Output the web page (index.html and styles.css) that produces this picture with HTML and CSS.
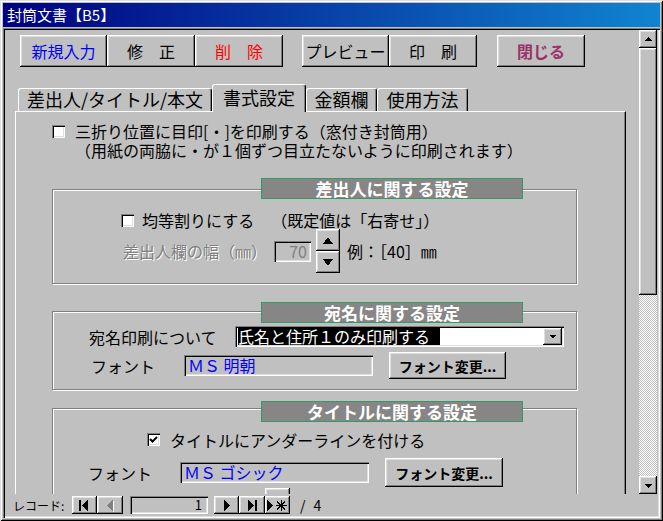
FILE: index.html
```html
<!DOCTYPE html>
<html lang="ja">
<head>
    <meta charset="UTF-8">
    <title>封筒文書【B5】</title>
    <link rel="stylesheet" href="styles.css">
</head>
<body>
<div class="window">
    <div class="titlebar">封筒文書【B5】</div>
    <div class="client">
        <div class="main">
            <div class="selector"></div>
            <div class="detail">
                <div class="toolbar">
                    <div class="btn-group">
                        <button class="cmd first blue">新規入力</button>
                        <button class="cmd">修　正</button>
                        <button class="cmd red">削　除</button>
                    </div>
                    <div class="btn-group gap19">
                        <button class="cmd first">プレビュー</button>
                        <button class="cmd">印　刷</button>
                    </div>
                    <button class="cmd close">閉じる</button>
                </div>

                <div class="tabs">
                    <div class="tab t1">差出人/タイトル/本文</div>
                    <div class="tab t2 active">書式設定</div>
                    <div class="tab t3">金額欄</div>
                    <div class="tab t4">使用方法</div>
                </div>

                <div class="page">
                    <div class="note">
                        <span class="check"></span>
                        <p class="note-text">三折り位置に目印[・]を印刷する（窓付き封筒用）<br>（用紙の両脇に・が１個ずつ目立たないように印刷されます）</p>
                    </div>

                    <!-- 差出人 -->
                    <div class="group g1">
                        <div class="legend">差出人に関する設定</div>
                        <div class="row r-check">
                            <span class="check"></span>
                            <span class="check-label">均等割りにする</span>
                            <span class="hint">（既定値は「右寄せ」）</span>
                        </div>
                        <div class="row r-width">
                            <span class="label disabled w151">差出人欄の幅（㎜）</span>
                            <span class="field num">70</span>
                            <div class="spinner">
                                <button class="spin">
                                    <svg width="24" height="22" shape-rendering="crispEdges"><polygon points="7,15 17,15 12,8" fill="#000"/></svg>
                                </button>
                                <button class="spin">
                                    <svg width="24" height="22" shape-rendering="crispEdges"><polygon points="7,8 17,8 12,15" fill="#000"/></svg>
                                </button>
                            </div>
                            <span class="example">例：［40］㎜</span>
                        </div>
                    </div>

                    <!-- 宛名 -->
                    <div class="group g2">
                        <div class="legend">宛名に関する設定</div>
                        <div class="row r-combo">
                            <span class="label w146 ml36">宛名印刷について</span>
                            <div class="combo">
                                <span class="combo-sel">氏名と住所１のみ印刷する</span>
                                <button class="drop">
                                    <svg width="19" height="17" shape-rendering="crispEdges"><polygon points="6,7 13,7 9.5,10.5" fill="#000"/></svg>
                                </button>
                            </div>
                        </div>
                        <div class="row r-font">
                            <span class="label w93 ml38">フォント</span>
                            <span class="field font-name">ＭＳ 明朝</span>
                            <button class="small-btn">フォント変更...</button>
                        </div>
                    </div>

                    <!-- タイトル -->
                    <div class="group g3">
                        <div class="legend">タイトルに関する設定</div>
                        <div class="row r-check3">
                            <span class="check checked">
                                <svg width="9" height="9"><polyline points="1,4 3.5,6.5 8,2" fill="none" stroke="#000" stroke-width="2"/></svg>
                            </span>
                            <span class="check-label">タイトルにアンダーラインを付ける</span>
                        </div>
                        <div class="row r-font3">
                            <span class="label w92 ml35">フォント</span>
                            <span class="field font-name">ＭＳ ゴシック</span>
                            <button class="small-btn wide">フォント変更...</button>
                        </div>
                        <div class="stub"></div>
                    </div>
                </div>
            </div>

            <div class="vscroll">
                <button class="sb-btn">
                    <svg width="16" height="16" shape-rendering="crispEdges"><polygon points="4,10 12,10 8,6" fill="#000"/></svg>
                </button>
                <div class="sb-thumb"></div>
                <div class="sb-track"></div>
                <button class="sb-btn">
                    <svg width="16" height="16" shape-rendering="crispEdges"><polygon points="4,7 12,7 8,11" fill="#000"/></svg>
                </button>
            </div>
        </div>

        <div class="navbar">
            <span class="nav-label">レコード:</span>
            <button class="nav-btn">
                <svg width="25" height="18" shape-rendering="crispEdges"><rect x="7" y="4" width="2" height="11" fill="#000"/><polygon points="16,4 16,15 10,9.5" fill="#000"/></svg>
            </button>
            <button class="nav-btn w26">
                <svg width="26" height="18" shape-rendering="crispEdges"><polygon points="17,5 17,16 11,10.5" fill="#fff"/><polygon points="16,4 16,15 10,9.5" fill="#808080"/></svg>
            </button>
            <span class="recno">1</span>
            <button class="nav-btn">
                <svg width="25" height="18" shape-rendering="crispEdges"><polygon points="10,4 10,15 16,9.5" fill="#000"/></svg>
            </button>
            <button class="nav-btn w26">
                <svg width="26" height="18" shape-rendering="crispEdges"><polygon points="9,4 9,15 15,9.5" fill="#000"/><rect x="16" y="4" width="2" height="11" fill="#000"/></svg>
            </button>
            <button class="nav-btn">
                <svg width="25" height="18" shape-rendering="crispEdges"><polygon points="2,4 2,15 8,9.5" fill="#000"/><g stroke="#000" stroke-width="1"><line x1="16" y1="4" x2="16" y2="15"/><line x1="10.5" y1="9.5" x2="21.5" y2="9.5"/><line x1="12" y1="5.5" x2="20" y2="13.5"/><line x1="20" y1="5.5" x2="12" y2="13.5"/></g></svg>
            </button>
            <span class="nav-count">/ 4</span>
        </div>
    </div>
</div>
</body>
</html>
```

FILE: styles.css
```css
* {
    box-sizing: border-box;
    margin: 0;
    padding: 0;
}
html,
body {
    width: 663px;
    height: 521px;
    overflow: hidden;
    background: #c0c0c0;
}
body {
    font-family: "Noto Sans CJK JP", "Noto Sans", sans-serif;
    font-size: 16px;
    color: #000;
}
button {
    font-family: inherit;
    color: inherit;
    border: none;
    background: #c0c0c0;
    display: flex;
    align-items: center;
    justify-content: center;
}
svg {
    display: block;
}

/* window frame */
.window {
    width: 663px;
    height: 521px;
    padding: 3px;
    display: flex;
    flex-direction: column;
    background: #c0c0c0;
    box-shadow: inset 1px 1px 0 #dfdfdf, inset -1px -1px 0 #000,
                inset 2px 2px 0 #fff, inset -2px -2px 0 #808080;
}
.titlebar {
    height: 24px;
    margin-bottom: 1px;
    padding-left: 4px;
    background: linear-gradient(to right, #000080, #1084d0);
    color: #fff;
    font-size: 15px;
    line-height: 24px;
}
.client {
    flex: 1;
    display: flex;
    flex-direction: column;
    padding: 2px;
    box-shadow: inset 1px 1px 0 #808080, inset 2px 2px 0 #000,
                inset -1px -1px 0 #fff, inset -2px -2px 0 #dfdfdf;
}
.main {
    display: flex;
    height: 464px;
}
.selector {
    width: 10px;
}
.detail {
    flex: 1;
    overflow: hidden;
}

/* raised look shared by buttons */
.cmd,
.small-btn,
.spin,
.drop,
.sb-btn,
.sb-thumb,
.nav-btn,
.stub {
    box-shadow: inset -1px -1px 0 #000, inset 1px 1px 0 #fff,
                inset -2px -2px 0 #808080, inset 2px 2px 0 #dfdfdf;
}
/* sunken look shared by fields */
.check,
.field,
.combo,
.recno {
    box-shadow: inset 1px 1px 0 #808080, inset 2px 2px 0 #000,
                inset -1px -1px 0 #fff, inset -2px -2px 0 #dfdfdf;
}

/* command buttons */
.toolbar {
    display: flex;
    margin-top: 5px;
    padding-left: 5px;
}
.btn-group {
    display: flex;
}
.gap19 {
    margin-left: 19px;
}
.cmd {
    width: 88px;
    height: 32px;
    font-size: 16px;
}
.cmd.first {
    width: 87px;
}
.cmd.blue {
    color: #0000ff;
}
.cmd.red {
    color: #ff0000;
}
.cmd.close {
    margin-left: 20px;
    color: #993366;
    font-weight: bold;
}

/* tabs */
.tabs {
    display: flex;
    align-items: flex-end;
    height: 27px;
    margin-top: 17px;
    padding-left: 3px;
    position: relative;
    z-index: 1;
}
.tab {
    height: 23px;
    border-top: 1px solid #fff;
    border-left: 1px solid #fff;
    border-right: 1px solid #000;
    border-radius: 3px 3px 0 0;
    box-shadow: inset -1px 0 0 #808080;
    font-size: 18px;
    line-height: 21px;
    text-align: center;
    background: #c0c0c0;
}
.tab.active {
    height: 28px;
    margin-bottom: -1px;
    line-height: 24px;
}
.t1 { width: 194px; }
.t2 { width: 94px; }
.t3 { width: 71px; }
.t4 { width: 91px; }

.page {
    width: 611px;
    height: 420px;
    padding: 10px 0 0 36px;
    border-top: 1px solid #fff;
    border-left: 1px solid #fff;
    border-right: 1px solid #000;
    box-shadow: inset -1px 0 0 #808080;
}

/* checkboxes */
.check {
    width: 13px;
    height: 13px;
    flex: none;
    background: #fff;
    display: flex;
    align-items: center;
    justify-content: center;
}
.note {
    display: flex;
    line-height: 19px;
}
.note .check {
    margin-top: 3px;
}
.note-text {
    margin-left: 10px;
}

/* group frames */
.group {
    position: relative;
    width: 525px;
    border: 1px solid #808080;
    box-shadow: inset 1px 1px 0 #fff, 1px 1px 0 #fff;
}
.legend {
    position: absolute;
    left: 208px;
    top: -12px;
    width: 262px;
    height: 21px;
    background: #868686;
    border: 1px solid #339966;
    color: #fff;
    font-size: 17px;
    font-weight: bold;
    line-height: 19px;
    text-align: center;
}
.g1 {
    height: 95px;
    margin-top: 29px;
    padding-top: 21px;
}
.g2 {
    height: 79px;
    margin-top: 27px;
    padding-top: 14px;
}
.g2 .legend {
    top: -10px;
}
.g3 {
    height: 120px;
    margin-top: 18px;
    padding-top: 21px;
}
.g3 .legend {
    top: -8px;
}

.row {
    display: flex;
    align-items: center;
}
.r-check {
    height: 18px;
    padding-left: 68px;
    align-items: flex-start;
    line-height: 18px;
}
.r-check .check {
    margin-top: 3px;
}
.check-label {
    margin-left: 8px;
}
.hint {
    margin-left: 17px;
}
.r-width {
    height: 44px;
    padding-left: 70px;
}
.r-combo {
    height: 21px;
}
.r-font {
    height: 27px;
    margin-top: 5px;
}
.r-check3 {
    height: 19px;
    padding-left: 94px;
}
.r-check3 .check-label {
    margin-left: 10px;
}
.r-font3 {
    height: 29px;
    margin-top: 9px;
}

.label {
    flex: none;
    white-space: nowrap;
}
.disabled {
    color: #808080;
    text-shadow: 1px 1px 0 #fff;
}
.w151 { width: 151px; }
.w146 { width: 146px; }
.w93 { width: 93px; }
.w92 { width: 92px; }
.ml36 { margin-left: 36px; }
.ml38 { margin-left: 38px; }
.ml35 { margin-left: 35px; }

/* fields */
.field {
    height: 21px;
    line-height: 21px;
    padding: 0 4px;
    white-space: nowrap;
}
.num {
    width: 37px;
    text-align: right;
    color: #808080;
}
.font-name {
    width: 189px;
    color: #0000ff;
}
.spinner {
    margin-left: 5px;
}
.spin {
    width: 24px;
    height: 22px;
}
.example {
    margin-left: 7px;
}

.combo {
    width: 329px;
    height: 21px;
    background: #fff;
    display: flex;
    align-items: center;
    padding: 2px;
}
.combo-sel {
    height: 17px;
    margin-left: 1px;
    padding-right: 10px;
    background: #000;
    color: #fff;
    line-height: 17px;
}
.drop {
    width: 19px;
    height: 17px;
    margin-left: auto;
}

.small-btn {
    width: 117px;
    height: 27px;
    margin-left: 16px;
    font-size: 14px;
    font-weight: bold;
}
.small-btn.wide {
    width: 118px;
    height: 29px;
}
.stub {
    width: 25px;
    height: 20px;
    margin: 1px 0 0 212px;
}

/* vertical scroll bar */
.vscroll {
    width: 18px;
    margin-right: 1px;
    display: flex;
    flex-direction: column;
}
.sb-btn {
    width: 18px;
    height: 18px;
    flex: none;
}
.sb-thumb {
    height: 247px;
    flex: none;
}
.sb-track {
    flex: 1;
    background-color: #c0c0c0;
    background-image: conic-gradient(#fff 25%, #c0c0c0 0 50%, #fff 0 75%, #c0c0c0 0);
    background-size: 2px 2px;
}

/* record navigation */
.navbar {
    height: 22px;
    display: flex;
    align-items: center;
    padding-left: 8px;
    font-size: 12px;
}
.nav-label {
    width: 59px;
    white-space: nowrap;
}
.nav-btn {
    width: 25px;
    height: 18px;
}
.nav-btn.w26 {
    width: 26px;
}
.recno {
    width: 78px;
    height: 18px;
    margin: 0 6px 0 7px;
    padding-right: 6px;
    text-align: right;
    font-size: 13px;
    line-height: 18px;
}
.nav-count {
    margin-left: 10px;
    font-size: 14px;
    word-spacing: 5px;
}
```
